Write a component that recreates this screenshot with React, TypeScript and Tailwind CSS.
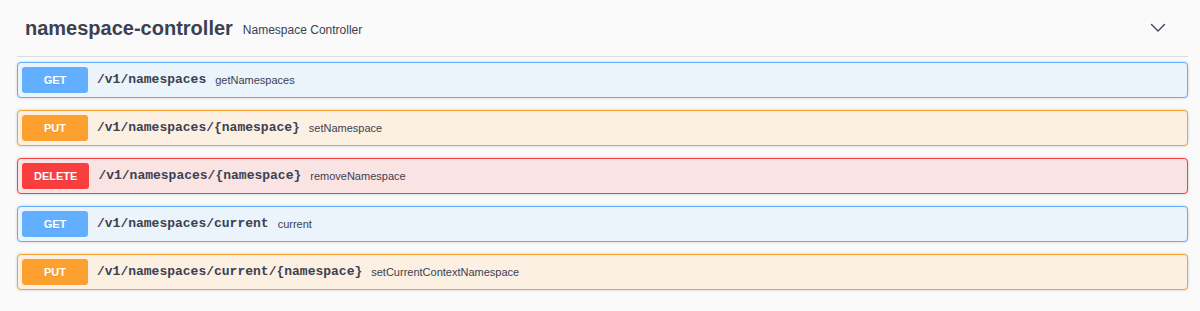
import React from "react";

type Method = "GET" | "PUT" | "DELETE";

const methodStyles: Record<Method, { row: string; badge: string }> = {
  GET: {
    row: "bg-[#ebf3fb] border-[#61affe]",
    badge: "bg-[#61affe]",
  },
  PUT: {
    row: "bg-[#fcf0e3] border-[#fca130]",
    badge: "bg-[#fca130]",
  },
  DELETE: {
    row: "bg-[#fae3e3] border-[#f93e3e]",
    badge: "bg-[#f93e3e]",
  },
};

const operations: { method: Method; path: string; opId: string }[] = [
  { method: "GET", path: "/v1/namespaces", opId: "getNamespaces" },
  { method: "PUT", path: "/v1/namespaces/{namespace}", opId: "setNamespace" },
  { method: "DELETE", path: "/v1/namespaces/{namespace}", opId: "removeNamespace" },
  { method: "GET", path: "/v1/namespaces/current", opId: "current" },
  {
    method: "PUT",
    path: "/v1/namespaces/current/{namespace}",
    opId: "setCurrentContextNamespace",
  },
];

const OperationRow = ({ method, path, opId }: { method: Method; path: string; opId: string }) => {
  const s = methodStyles[method];
  return (
    <div
      className={`flex h-[36px] items-center rounded-[4px] border pl-[4px] shadow-[0_0_3px_rgba(0,0,0,0.19)] ${s.row}`}
    >
      <span
        className={`flex h-[26px] min-w-[66px] items-center justify-center rounded-[3px] px-[12px] text-[11px] font-bold text-white [text-shadow:0_1px_0_rgba(0,0,0,0.1)] ${s.badge}`}
      >
        {method}
      </span>
      <span className="ml-[9px] font-['Liberation_Mono',monospace] text-[13px] font-bold text-[#3b4151]">
        {path}
      </span>
      <span className="ml-[9px] text-[11px] text-[#3b4151]">{opId}</span>
    </div>
  );
};

export default function App() {
  return (
    <div className="min-h-[311px] bg-[#fafafa] pl-[17px] pr-[12px] font-['Liberation_Sans',Arial,sans-serif]">
      {/* tag header */}
      <div className="flex h-[57px] items-center justify-between border-b border-[#dcdcdc] pl-[8px] pr-[22px]">
        <div className="flex items-baseline gap-[10px] text-[#3b4151]">
          <span className="text-[20px] font-bold">namespace-controller</span>
          <span className="relative -top-[1px] text-[12px]">Namespace Controller</span>
        </div>
        <svg width="16" height="10" viewBox="0 0 16 10" fill="none">
          <polyline
            points="1.5,1.5 8,8 14.5,1.5"
            stroke="#3b4151"
            strokeWidth="1.3"
            strokeLinecap="round"
            strokeLinejoin="round"
          />
        </svg>
      </div>

      <div className="mt-[5px] flex flex-col gap-[12px]">
        {operations.map((op, i) => (
          <OperationRow key={i} {...op} />
        ))}
      </div>
    </div>
  );
}
